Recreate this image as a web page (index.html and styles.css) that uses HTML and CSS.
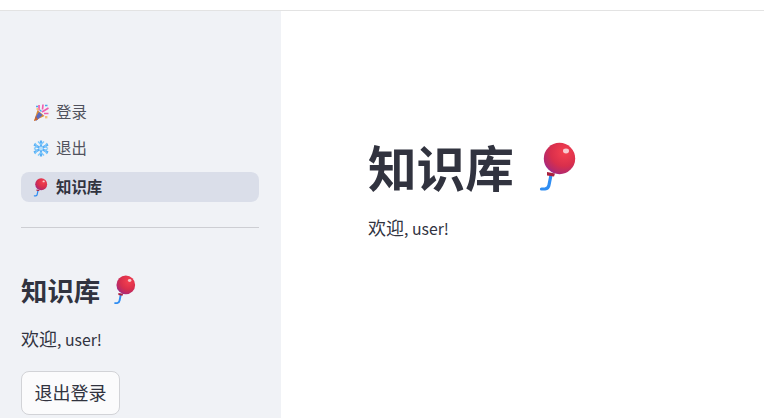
FILE: index.html
```html
<!DOCTYPE html>
<html lang="zh-CN">
<head>
  <meta charset="UTF-8">
  <title>知识库</title>
  <link rel="stylesheet" href="styles.css">
</head>
<body>
  <svg class="defs" width="0" height="0" aria-hidden="true">
    <defs>
      <radialGradient id="balloon-fill" cx="0.66" cy="0.3" r="0.8">
        <stop offset="0" stop-color="#f5404f"/>
        <stop offset="0.55" stop-color="#d92f4c"/>
        <stop offset="0.85" stop-color="#b52a6c"/>
        <stop offset="1" stop-color="#8f2aa8"/>
      </radialGradient>
      <symbol id="balloon" viewBox="0 0 42 50">
        <path d="M13 33 L11 43 Q10.500 46.500 7 47 L3.500 47" fill="none" stroke="#2f8df2" stroke-width="3.200" stroke-linecap="round"/>
        <circle cx="21.500" cy="16.500" r="15.700" fill="url(#balloon-fill)"/>
        <ellipse cx="28" cy="9" rx="3" ry="2.400" fill="#f8c9cf"/>
        <path d="M9 30 L17 31.500 L16 34.500 L9 33.500 Z" fill="#a8203f"/>
      </symbol>
    </defs>
  </svg>

  <div class="topbar"></div>
  <div class="layout">
    <aside class="sidebar">
      <nav class="nav">
        <a class="nav-item">
          <svg class="nav-icon" viewBox="0 0 16 19">
            <path d="M1 18 L4.500 7 L11.500 13 Z" fill="#d98a36"/>
            <path d="M2 15 L6 9 L9.500 12 L3 18 Z" fill="#5a69c0"/>
            <path d="M1 18 L3 13 L5 16.500 Z" fill="#c9642e"/>
            <path d="M6 2 V7.500 M10 1.500 L9.500 6.500 M9 9 L15.500 5 M11 10.500 H15.500" stroke="#ef5fb0" stroke-width="1.700" fill="none"/>
            <path d="M3 3.500 H5 M12 2.500 H14.500 M7 7 L8.500 8.500" stroke="#4aa8ec" stroke-width="1.400" fill="none"/>
            <rect x="12" y="13" width="2.400" height="2.400" fill="#f3c27a"/>
            <rect x="3.500" y="5" width="2" height="2" fill="#f3c27a"/>
          </svg>
          <span class="nav-label">登录</span>
        </a>
        <a class="nav-item">
          <svg class="nav-icon" viewBox="0 0 16 19">
            <path d="M8 1.500 V17.500 M1 5.500 L15 13.500 M15 5.500 L1 13.500" stroke="#58aef5" stroke-width="2.200" fill="none"/>
            <path d="M5 2.500 L8 5.500 L11 2.500 M5 16.500 L8 13.500 L11 16.500 M1 9.500 L4 7.500 L2 4 M1 9.500 L4 11.500 L2 15 M15 9.500 L12 7.500 L14 4 M15 9.500 L12 11.500 L14 15" stroke="#7cc7fa" stroke-width="1.400" fill="none"/>
            <circle cx="8" cy="9.500" r="2" fill="#b5e0fc"/>
          </svg>
          <span class="nav-label">退出</span>
        </a>
        <a class="nav-item active">
          <svg class="nav-icon"><use href="#balloon"/></svg>
          <span class="nav-label">知识库</span>
        </a>
      </nav>
      <hr class="divider">
      <h3 class="side-title">知识库<svg class="side-balloon"><use href="#balloon"/></svg></h3>
      <p class="side-text">欢迎<span class="latin">, user!</span></p>
      <button class="btn">退出登录</button>
    </aside>
    <main class="main">
      <h1 class="title">知识库<svg class="title-balloon"><use href="#balloon"/></svg></h1>
      <p class="text">欢迎<span class="latin">, user!</span></p>
    </main>
  </div>
</body>
</html>
```

FILE: styles.css
```css
html, body {
  height: 100%;
}

body {
  margin: 0;
  overflow: hidden;
  background: white;
  color: #31333f;
  font-family: "Noto Sans CJK SC", "Noto Sans", sans-serif;
}

.defs {
  position: absolute;
}

.topbar {
  height: 10px;
  border-bottom: 1px solid #e3e3e3;
}

.layout {
  display: flex;
  height: 407px;
}

.sidebar {
  width: 238px;
  padding: 86px 22px 0 21px;
  background: #f0f2f6;
}

.nav {
  display: flex;
  flex-direction: column;
  gap: 6px;
}

.nav-item {
  display: flex;
  align-items: center;
  gap: 7px;
  height: 30px;
  padding-left: 12px;
  border-radius: 8px;
  font-size: 15.4px;
  color: #50525d;
}

.nav-item.active {
  margin-top: 3px;
  background: #dadee9;
  color: #31333f;
  font-weight: 700;
}

.nav-label {
  margin-bottom: 3px;
}

.nav-icon {
  width: 16px;
  height: 19px;
}

.divider {
  margin: 25px 0 0;
  border: 0;
  border-top: 1px solid #cdced3;
}

.side-title {
  display: flex;
  align-items: center;
  margin: 42px 0 0;
  font-size: 26.4px;
  line-height: 40px;
  font-weight: 700;
}

.side-balloon {
  width: 25px;
  height: 30px;
  margin: 0 0 0 13px;
}

.side-text {
  margin: 15px 0 0;
  font-size: 18px;
  line-height: 26px;
}

.latin {
  font-size: 15.8px;
}

.btn {
  display: block;
  width: 99px;
  height: 44px;
  margin-top: 18px;
  padding: 0 0 2px;
  background: #fbfbfc;
  border: 1px solid #d2d3d7;
  border-radius: 8px;
  font: inherit;
  font-size: 18px;
  color: #31333f;
}

.main {
  flex: 1;
  padding: 127px 0 0 87px;
}

.title {
  display: flex;
  align-items: center;
  margin: 0;
  height: 56px;
  font-size: 48.6px;
  font-weight: 700;
  line-height: 56px;
}

.title-balloon {
  width: 42px;
  height: 50px;
  margin: 2px 0 0 24px;
}

.text {
  margin: 20px 0 0;
  font-size: 18px;
  line-height: 26px;
}
```
